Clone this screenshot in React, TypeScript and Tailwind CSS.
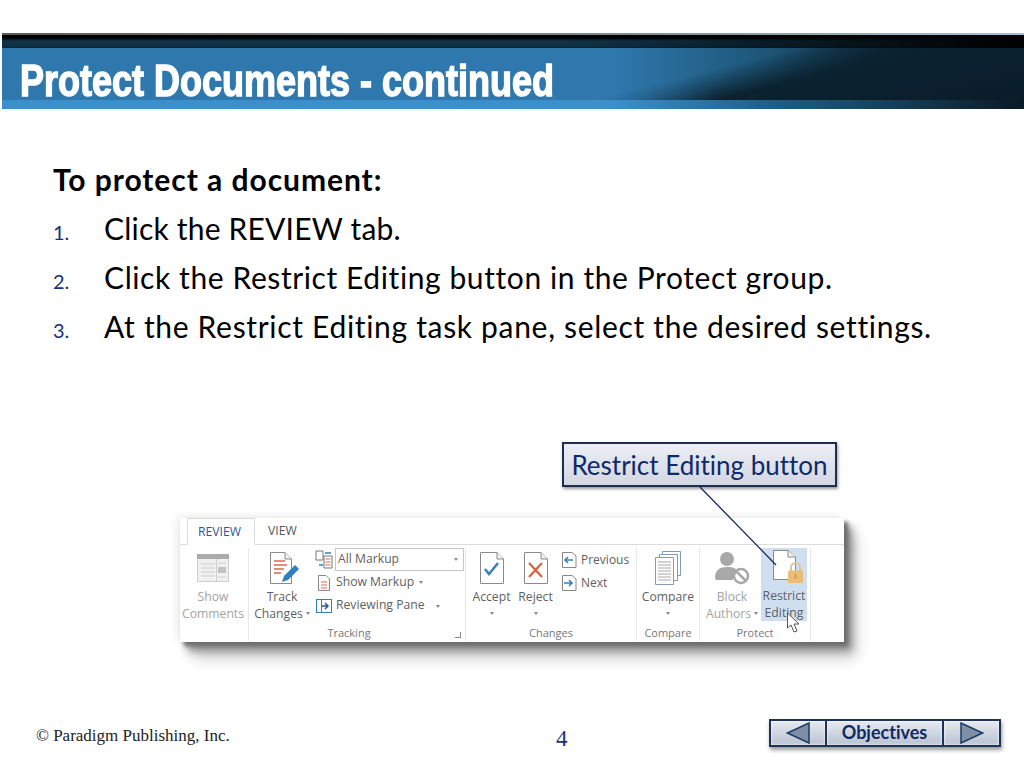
import React from "react";

const Doc = ({ children }: { children?: React.ReactNode }) => (
  <svg width="34" height="36" viewBox="0 0 34 36" className="block">
    <path d="M5.5 2.5H22L28.5 9V33.5H5.5Z" fill="#fff" stroke="#8a8a8a" />
    <path d="M22 2.5V9H28.5" fill="#f2f2f2" stroke="#8a8a8a" />
    {children}
  </svg>
);

const Caret = () => <span className="inline-block w-0 h-0 border-x-[2.5px] border-x-transparent border-t-[3px] border-t-[#888] align-middle" />;

const BigBtn = ({ icon, l1, l2, w, gray, caret, className = "" }: { icon: React.ReactNode; l1: string; l2?: string; w: string; gray?: boolean; caret?: boolean; className?: string }) => (
  <div className={`flex flex-col items-center shrink-0 ${w} ${className}`}>
    <div className="h-[40px] flex items-center justify-center">{icon}</div>
    <div className={`text-[12.2px] leading-[17px] whitespace-nowrap ${gray ? "text-[#a3a3a3]" : "text-[#5f5f5f]"}`}>{l1}</div>
    <div className={`text-[12.2px] leading-[17px] whitespace-nowrap flex items-center gap-[3px] h-[17px] ${gray ? "text-[#a3a3a3]" : "text-[#5f5f5f]"}`}>
      {l2}
      {caret && <Caret />}
    </div>
  </div>
);

const Group = ({ w, label, children, launcher }: { w: string; label?: string; children: React.ReactNode; launcher?: boolean }) => (
  <div className={`relative flex flex-col shrink-0 border-r border-[#e8e8e8] my-[3px] ${w}`}>
    <div className="flex h-[74px]">{children}</div>
    <div className={`h-[17px] mt-[2px] text-center text-[11px] leading-[17px] text-[#777] ${launcher ? "pr-[16px]" : ""}`}>{label}</div>
    {launcher && <span className="absolute right-[4px] bottom-[3px] w-[6px] h-[6px] border-b border-r border-[#888]" />}
  </div>
);

function Ribbon() {
  return (
    <div className="relative ml-[180px] w-[664px] h-[124px] bg-white shadow-[4px_4px_4px_#6e6e6e,8px_9px_8px_#909090,12px_16px_14px_#cdcdcd,-3px_-2px_8px_#ececec] font-['Open_Sans',sans-serif]">
      <div className="h-[27px] flex items-end border-b border-[#dcdcdc] pl-[7px]">
        <div className="w-[68px] h-[27px] -mb-px bg-white border border-[#dcdcdc] border-b-white text-[#2b579a] text-[12.2px] leading-[26px] text-center pr-[3px]">REVIEW</div>
        <div className="ml-[13px] text-[#555] text-[12.2px] leading-[26px]">VIEW</div>
      </div>
      <div className="flex">
        <Group w="w-[69px]">
          <BigBtn w="w-[66px]" gray l1="Show" l2="Comments" icon={
            <svg width="32" height="28" viewBox="0 0 32 28"><rect x="0.5" y="0.5" width="31" height="27" fill="#f1f0f0" stroke="#cfcfcf" /><rect x="0" y="0" width="32" height="5" fill="#ababab" /><path d="M4 10h14M4 14h14M4 18h14M4 22h14M21 9h8M21 23h8" stroke="#cfcfcf" /><path d="M19.500 5v22" stroke="#cfcfcf" /><rect x="21" y="13" width="8" height="6" fill="#c2c2c2" /></svg>
          } />
        </Group>
        <Group w="w-[217px]" label="Tracking" launcher>
          <BigBtn w="w-[66px]" l1="Track" l2="Changes" caret icon={
            <svg width="36" height="36" viewBox="0 0 36 36">
              <path d="M6.500 2.500H21L27.500 9V33.500H6.500Z" fill="#fff" stroke="#8a8a8a" />
              <path d="M21 2.500V9H27.500" fill="#f2f2f2" stroke="#8a8a8a" />
              <path d="M10 11h11M10 15h13M10 19h10M10 23h7" stroke="#d9694f" strokeWidth="1.300" />
              <path d="M18 32l2-6L31 15l4 4-11 11z" fill="#2f80c0" />
            </svg>
          } />
          <div className="flex flex-col text-[12.2px] text-[#5f5f5f]">
            <div className="h-[23px] flex items-center">
              <svg width="19" height="19" viewBox="0 0 19 19" className="mr-[1px]"><path d="M1 1h7v9H1zM9 6h8v12H9z" fill="#fff" stroke="#777" /><path d="M10.500 9h5M10.500 12h5M10.500 15h5" stroke="#d9694f" /><path d="M10 3h6M4 15h4" stroke="#2f80c0" strokeWidth="1.5" /></svg>
              <div className="w-[129px] h-[23px] border border-[#c6c6c6] flex items-center justify-between pl-[2px] pr-[5px] leading-none"><span>All Markup</span><Caret /></div>
            </div>
            <div className="h-[23px] flex items-center gap-[5px] pl-[2px]">
              <svg width="14" height="16" viewBox="0 0 14 16"><path d="M1.500 .5H9L12.500 4V15.500H1.500Z" fill="#fff" stroke="#888" /><path d="M4 7h6M4 10h6M4 13h6" stroke="#d9694f" /></svg>
              <span>Show Markup</span><Caret />
            </div>
            <div className="h-[23px] flex items-center gap-[4px] pl-[1px]">
              <svg width="16" height="16" viewBox="0 0 16 16"><rect x=".5" y="1.500" width="15" height="13" fill="#fff" stroke="#2f80c0" /><path d="M5.500 1.500v13" stroke="#2f80c0" /><path d="M6 8h6M9 5l3 3-3 3" fill="none" stroke="#2b579a" strokeWidth="1.500" /></svg>
              <span>Reviewing Pane</span><span className="ml-[7px]"><Caret /></span>
            </div>
          </div>
        </Group>
        <Group w="w-[171px]" label="Changes">
          <BigBtn w="w-[45px]" className="ml-[3px]" l1="Accept" caret icon={
            <Doc><path d="M10 19l4 5 9-11" fill="none" stroke="#3a7fc2" strokeWidth="2.500" /></Doc>
          } />
          <BigBtn w="w-[43px]" l1="Reject" caret icon={
            <Doc><path d="M10 13l13 14M23 13L10 27" fill="none" stroke="#d9603f" strokeWidth="2.200" /></Doc>
          } />
          <div className="flex flex-col text-[12px] text-[#5f5f5f] ml-[5px]">
            <div className="h-[23px] flex items-center gap-[4px]">
              <svg width="15" height="16" viewBox="0 0 15 16"><path d="M.5.500H10L14 4V15.500H.5Z" fill="#fff" stroke="#888" /><path d="M11 8H3M6 5L3 8l3 3" fill="none" stroke="#2f80c0" strokeWidth="1.500" /></svg>
              <span>Previous</span>
            </div>
            <div className="h-[23px] flex items-center gap-[4px]">
              <svg width="15" height="16" viewBox="0 0 15 16"><path d="M.5.500H10L14 4V15.500H.5Z" fill="#fff" stroke="#888" /><path d="M2 8h8M7 5l3 3-3 3" fill="none" stroke="#2f80c0" strokeWidth="1.500" /></svg>
              <span>Next</span>
            </div>
          </div>
        </Group>
        <Group w="w-[63px]" label="Compare">
          <BigBtn w="w-[62px]" l1="Compare" caret icon={
            <svg width="30" height="34" viewBox="0 0 30 34"><path d="M9.500 .5H27.500V24.500H9.500Z" fill="#fff" stroke="#7f9db9" /><path d="M6.500 3.500H24.500V29.500H6.500Z" fill="#fff" stroke="#7f9db9" /><path d="M2.500 6.500H20.500V33.500H2.500Z" fill="#fff" stroke="#7f9db9" /><path d="M5 11h13M5 14h13M5 17h13M5 20h13M5 23h13M5 26h13M5 29h13" stroke="#a8a8a8" /></svg>
          } />
        </Group>
        <Group w="w-[111px]" label="Protect">
          <BigBtn w="w-[61px]" className="pl-[3px]" gray l1="Block" l2="Authors" caret icon={
            <svg width="36" height="34" viewBox="0 0 36 34"><circle cx="13" cy="8" r="7" fill="#a8a8a8" /><path d="M1 27c0-8 5-11 12-11s10 2 11 5c-3 1-5 4-5 8H2z" fill="#a8a8a8" /><circle cx="27" cy="25" r="7" fill="#fff" stroke="#a8a8a8" strokeWidth="2.500" /><path d="M22 20l10 10" stroke="#a8a8a8" strokeWidth="2.500" /></svg>
          } />
          <div className="w-[46px] h-[73px] bg-[#d0dff0] flex flex-col items-center shrink-0">
            <div className="h-[40px] flex items-center justify-center">
              <svg width="40" height="38" viewBox="0 0 40 38"><path d="M9.500 1.500H24L31.500 8V30.500H9.500Z" fill="#fff" stroke="#8a8a8a" /><path d="M24 1.500V8H31.500" fill="#f2f2f2" stroke="#8a8a8a" /><path d="M27 22v-3.500a4.500 4.500 0 0 1 9 0V22" fill="none" stroke="#dcc79a" strokeWidth="2" /><rect x="24" y="21.500" width="15" height="12.500" rx="1" fill="#e9bd72" /><rect x="30.500" y="25" width="2" height="5" fill="#cf9f55" /></svg>
            </div>
            <div className="text-[12.2px] leading-[17px] text-[#5f5f5f]">Restrict</div>
            <div className="text-[12.2px] leading-[17px] text-[#5f5f5f]">Editing</div>
          </div>
        </Group>
      </div>
      <svg width="16" height="22" viewBox="0 0 16 22" className="absolute left-[606px] top-[94px]"><path d="M1.500 1v15l3.500-3 3 7 3-1-3-7h5z" fill="#fff" stroke="#555" /></svg>
    </div>
  );
}

const Tri = ({ dir }: { dir: "l" | "r" }) => (
  <svg width="24" height="22" viewBox="0 0 24 22">
    <path d={dir === "l" ? "M1.500 11L23 1v20z" : "M22.500 11L1 1v20z"} fill="#7f8fa6" stroke="#1d3a66" strokeWidth="1.500" />
  </svg>
);

const navBtn = "h-[28px] flex items-center justify-center bg-[linear-gradient(#e6e9f0,#b9c2d2)] border-2 border-[#1d3458] shadow-[inset_0_0_3px_#fff]";

const steps = [
  { t: "Click the REVIEW tab.", c: "tracking-[0.2px]" },
  { t: "Click the Restrict Editing button in the Protect group.", c: "tracking-[0.59px]" },
  { t: "At the Restrict Editing task pane, select the desired settings.", c: "tracking-[0.68px]" },
];

export default function App() {
  return (
    <div className="relative w-[1024px] h-[768px] bg-white overflow-hidden flex flex-col font-['Lato',sans-serif] [font-variant-ligatures:none]">
      <header className="ml-[2px] mt-[33px] h-[76px] flex flex-col shrink-0">
        <div className="h-[2px] bg-[linear-gradient(to_right,#5b5b5b,#7d8b92_60%,#9fc3d4)]" />
        <div className="h-[13px] bg-[linear-gradient(#000_0,#000_3px,#10344a_6px,#0f2e42_12px,#0b1f2c_13px)] relative">
          <div className="absolute inset-0 bg-[linear-gradient(to_right,transparent_55%,#000_100%)]" />
        </div>
        <div className="flex-1 flex flex-col bg-[linear-gradient(to_right,#2f78ad_0%,#2f78ad_60%,#1d5576_75%,#0e2a3a_86%,#071219_100%)] relative">
          <div className="absolute inset-0 bg-[linear-gradient(166deg,transparent_63%,#0b2230_73%,#0a1c28_100%)] [mask-image:linear-gradient(to_right,transparent_55%,#000_70%)]" />
          <div className="relative h-[52px] flex items-center pl-[18px] pt-[12px]">
            <h1 className="text-[45px] leading-none font-bold text-white font-['Liberation_Sans',sans-serif] [-webkit-text-stroke:1.5px_white] whitespace-nowrap origin-left scale-x-[0.8]">Protect Documents - continued</h1>
          </div>
          <div className="relative mt-auto h-[9px] bg-[linear-gradient(to_right,#3b8fca_0%,#3b8fca_60%,#1f5f88_75%,#12374d_90%,#0a1a24_100%)]" />
        </div>
      </header>

      <main className="pl-[53px] pt-[46px] text-[30px] leading-[49px] text-black">
        <p className="font-bold h-[49px] tracking-[0.95px]">To protect a document:</p>
        <ol>
          {steps.map((s, i) => (
            <li key={i} className="flex items-baseline whitespace-nowrap h-[49px]">
              <span className="w-[51px] shrink-0 text-[20px] leading-[49px] text-[#1c2f7a]">{i + 1}.</span>
              <span className={s.c}>{s.t}</span>
            </li>
          ))}
        </ol>
      </main>

      <div className="mt-[91px] ml-[562px] w-[275px] h-[45px] pt-[1px] flex items-center justify-center border-2 border-[#1d2f4f] bg-[linear-gradient(#eceef3,#d3d7e2)] shadow-[1px_2px_3px_#999] text-[26px] text-[#0e2a68] whitespace-nowrap">Restrict Editing button</div>
      <div className="mt-[31px]"><Ribbon /></div>
      <svg width="80" height="82" viewBox="0 0 80 82" className="absolute left-[698px] top-[485px]"><path d="M2 2L78 80" stroke="#12275c" strokeWidth="1.300" /></svg>

      <footer className="mt-auto mb-[20px] h-[30px] flex items-center font-['Liberation_Serif',serif]">
        <span className="ml-[36px] w-[520px] text-[17px] text-[#222] mt-[6px]">© Paradigm Publishing, Inc.</span>
        <span className="w-[12px] text-[23px] text-[#1c2f7a] mt-[12px]">4</span>
        <nav className="ml-[201px] flex shadow-[1px_3px_4px_#999] font-['Lato',sans-serif]">
          <div className={`${navBtn} w-[58px]`}><Tri dir="l" /></div>
          <div className={`${navBtn} w-[119px] -mx-[2px] pb-[2px] text-[18px] font-bold text-[#12295f]`}>Objectives</div>
          <div className={`${navBtn} w-[59px]`}><Tri dir="r" /></div>
        </nav>
      </footer>
    </div>
  );
}
